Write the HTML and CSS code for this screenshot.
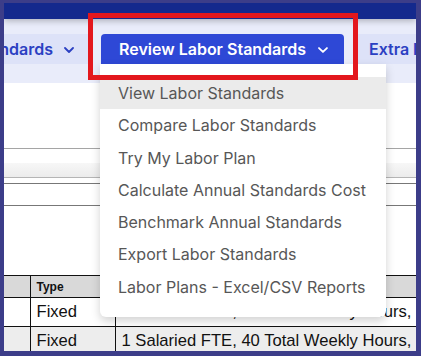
FILE: index.html
```html
<!DOCTYPE html>
<html lang="en">
<head>
    <meta charset="UTF-8">
    <meta name="viewport" content="width=device-width, initial-scale=1.0">
    <title>Review Labor Standards</title>
    <link rel="stylesheet" href="styles.css">
</head>
<body>
    <div class="frame">
        <div class="topbar"></div>

        <!-- main navigation -->
        <nav class="navbar">
            <div class="nav-clip">
                <div class="nav-item">
                    Labor Standards
                    <svg class="chev" width="10" height="6" viewBox="0 0 10 6"><path d="M1 1l4 4 4-4" fill="none" stroke="currentColor" stroke-width="1.8" stroke-linecap="round" stroke-linejoin="round"/></svg>
                </div>
            </div>
            <div class="nav-drop">
                <div class="nav-item active">
                    Review Labor Standards
                    <svg class="chev" width="10" height="6" viewBox="0 0 10 6"><path d="M1 1l4 4 4-4" fill="none" stroke="currentColor" stroke-width="1.8" stroke-linecap="round" stroke-linejoin="round"/></svg>
                </div>
                <ul class="dropdown">
                    <li class="selected">View Labor Standards</li>
                    <li>Compare Labor Standards</li>
                    <li>Try My Labor Plan</li>
                    <li>Calculate Annual Standards Cost</li>
                    <li>Benchmark Annual Standards</li>
                    <li>Export Labor Standards</li>
                    <li>Labor Plans - Excel/CSV Reports</li>
                </ul>
            </div>
            <div class="nav-item extra">Extra Labor</div>
        </nav>

        <!-- page body -->
        <main class="content">
            <div class="rule"></div>
            <div class="band"></div>
            <div class="rule rule-light"></div>
            <div class="rule-box"></div>

            <table class="plan-table">
                <colgroup>
                    <col class="col-blank">
                    <col class="col-type">
                    <col class="col-details">
                </colgroup>
                <tr class="head">
                    <th class="blank"></th>
                    <th>Type</th>
                    <th>Details</th>
                </tr>
                <tr>
                    <td class="blank"></td>
                    <td>Fixed</td>
                    <td>1 Salaried FTE, 40 Total Weekly Hours, <span class="mark">1</span></td>
                </tr>
                <tr class="alt">
                    <td class="blank"></td>
                    <td>Fixed</td>
                    <td>1 Salaried FTE, 40 Total Weekly Hours, <span class="mark">1</span></td>
                </tr>
            </table>
        </main>

        <div class="callout"></div>
    </div>
</body>
</html>
```

FILE: styles.css
```css
body {
    margin: 0;
    font-family: Inter, "Noto Sans", sans-serif;
}
.frame {
    position: relative;
    width: 421px;
    height: 356px;
    box-sizing: border-box;
    border-style: solid;
    border-color: #3c3d89;
    border-width: 3px 5px 5px 4px;
    overflow: hidden;
    background: #fff;
}
.topbar {
    height: 16px;
    background: #14298d;
    box-shadow: 0 2px 6px rgba(0, 0, 0, 0.25);
    position: relative;
    z-index: 1;
}
.navbar {
    display: flex;
    gap: 13px;
    padding: 15px 0 19px;
    background: #e9ecfa;
    white-space: nowrap;
}
.nav-clip {
    width: 84px;
    flex: none;
    display: flex;
    justify-content: flex-end;
    overflow: hidden;
}
.nav-item {
    flex: none;
    display: flex;
    align-items: center;
    gap: 11px;
    height: 30px;
    padding: 0 14px;
    background: #dde2f8;
    color: #2b40c2;
    font-size: 16px;
    font-weight: 600;
}
.nav-item.extra {
    padding-left: 12px;
}
.nav-item .chev {
    margin-top: 1px;
}
.nav-drop {
    position: relative;
    flex: none;
}
.nav-item.active {
    padding: 0 16px 0 18px;
    width: 243px;
    box-sizing: border-box;
    background: #2e48d6;
    color: #fff;
    border-radius: 4px 4px 0 0;
    gap: 12px;
}
.dropdown {
    position: absolute;
    top: 100%;
    left: -1px;
    z-index: 5;
    width: 286px;
    margin: 0;
    padding: 13px 0 14px;
    list-style: none;
    background: #fff;
    border-radius: 0 0 6px 6px;
    box-shadow: 0 4px 10px rgba(0, 0, 0, 0.18);
}
.dropdown li {
    padding: 0 18px;
    height: 32.3px;
    line-height: 32px;
    font-size: 16px;
    color: #575757;
}
.dropdown li.selected {
    background: #ebebeb;
}
.content {
    padding-top: 65px;
}
.rule {
    height: 1px;
    background: #a5a5a5;
}
.band {
    height: 14px;
    margin-top: 14px;
    background: linear-gradient(#f7f7f7, #ececec);
}
.rule-light {
    background: #b5b5b5;
}
.rule-box {
    height: 21px;
    margin-top: 5px;
    border-top: 1px solid #777;
    border-bottom: 1px solid #777;
}
.plan-table {
    margin-top: 69px;
    width: 440px;
    table-layout: fixed;
    border-collapse: collapse;
    font-family: "Liberation Sans", Arial, sans-serif;
    font-size: 16.6px;
    color: #111;
    white-space: nowrap;
}
.col-blank {
    width: 26px;
}
.col-type {
    width: 85px;
}
.plan-table th,
.plan-table td {
    border: 1px solid #111;
    padding: 0 6px;
    text-align: left;
    overflow: hidden;
}
.plan-table tr {
    height: 29px;
}
.plan-table tr.head {
    height: 22px;
    background: #d9d9d9;
}
.plan-table tr.alt {
    background: #ededed;
}
.plan-table th {
    font-size: 12px;
    font-weight: bold;
}
.plan-table .blank {
    border-left: none;
}
.mark {
    color: #f2c14e;
}
.callout {
    position: absolute;
    left: 84px;
    top: 10px;
    width: 270px;
    height: 67px;
    box-sizing: border-box;
    border: 5px solid #e3171d;
    z-index: 10;
}
```
